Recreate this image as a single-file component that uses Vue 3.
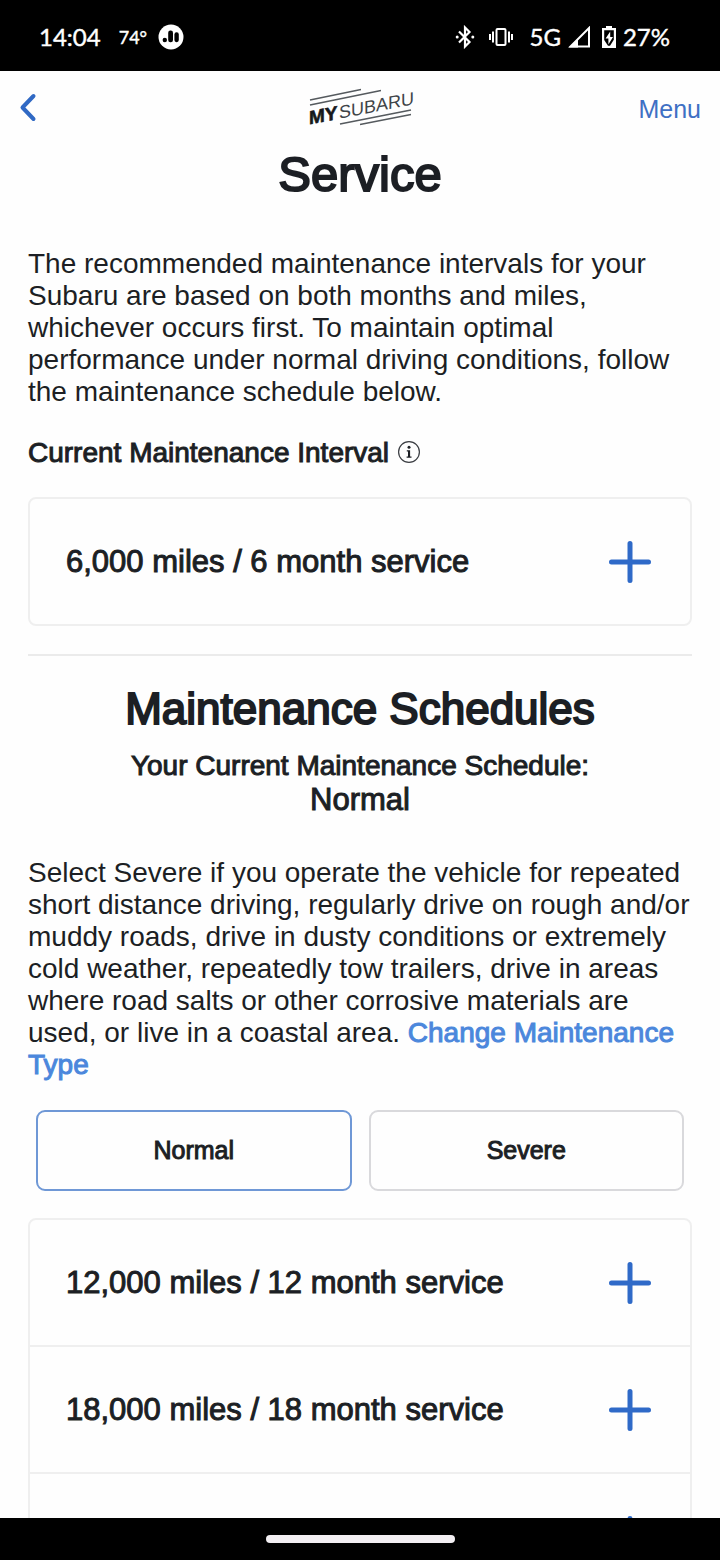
<script setup>
import { ref } from 'vue'

const current = '6,000 miles / 6 month service'
const intervals = [
  '12,000 miles / 12 month service',
  '18,000 miles / 18 month service',
]
const scheduleTypes = ['Normal', 'Severe']
const selected = ref('Normal')
</script>

<template>
  <div class="screen">
    <div class="status">
      <div class="status-group">
        <span class="clock">14:04</span>
        <span class="temp">74°</span>
        <svg class="app-badge" width="26" height="26" viewBox="0 0 26 26" aria-hidden="true">
          <circle cx="13" cy="13" r="12.5" fill="#fff" />
          <circle cx="6.8" cy="16" r="2.2" />
          <rect x="10.2" y="6.5" width="4.8" height="11.7" rx="2.2" />
          <rect x="16.4" y="8.3" width="4.4" height="9.9" rx="2.1" />
        </svg>
      </div>
      <div class="status-group">
        <svg width="20" height="24" viewBox="0 0 20 24" fill="none" stroke="#fff" stroke-width="2.2" aria-hidden="true">
          <path d="M4 6.5 14.5 17 10 21.5V2.5L14.5 7 4 17.5" />
          <circle cx="2.2" cy="12" r="1.5" fill="#fff" stroke="none" />
          <circle cx="17.8" cy="12" r="1.5" fill="#fff" stroke="none" />
        </svg>
        <svg class="vibrate" width="26" height="20" viewBox="0 0 26 20" fill="none" stroke="#fff" stroke-width="2" aria-hidden="true">
          <rect x="8.5" y="2" width="9" height="16" rx="1" />
          <path d="M5 4.5v11M21 4.5v11M2 7v6M24 7v6" />
        </svg>
        <span class="net">5G</span>
        <svg class="signal" width="23" height="22" viewBox="0 0 23 22" aria-hidden="true">
          <path d="M2.5 20.5H21V2Z" fill="none" stroke="#fff" stroke-width="2" />
          <path d="M1 21.5 10 12.5V21.5Z" fill="#fff" />
        </svg>
        <svg class="battery" width="14" height="24" viewBox="0 0 14 24" aria-hidden="true">
          <path d="M4 1h6v2h4v20H0V3h4Z" fill="#fff" />
          <path d="M2.2 5.2h9.6v9.6L8 20.8H6L2.2 15Z" fill="#000" />
          <path d="M8.2 6.5 3.6 13.6H6.4V19.6L11 12H8.2Z" fill="#fff" />
        </svg>
        <span class="net">27%</span>
      </div>
    </div>

    <main class="page">
      <header class="bar">
        <button class="back" aria-label="Back">
          <svg width="18" height="30" viewBox="0 0 18 30" fill="none" stroke="#3069c4" stroke-width="4" stroke-linecap="round" stroke-linejoin="round" aria-hidden="true">
            <path d="M14.5 3 3.5 14.5 14.5 26" />
          </svg>
        </button>
        <svg class="logo" width="106" height="42" viewBox="0 0 106 42" role="img" aria-label="MySubaru">
          <g stroke="#555a5e" stroke-width="1.5">
            <path d="M3 13 54 2.5M3 18 74 3.5" />
            <path d="M33 37 104 23M53 37.5 104 27.5" />
          </g>
          <g transform="skewY(-11)">
            <text class="logo-my" x="2" y="38">MY</text>
            <text class="logo-subaru" x="32" y="38">SUBARU</text>
          </g>
        </svg>
        <a class="menu" href="#menu">Menu</a>
      </header>

      <h1>Service</h1>

      <p class="copy intro">
        The recommended maintenance intervals for your Subaru are based on both months and miles,
        whichever occurs first. To maintain optimal performance under normal driving conditions,
        follow the maintenance schedule below.
      </p>

      <h2 class="label">
        Current Maintenance Interval
        <button class="info" aria-label="About maintenance intervals">
          <svg width="24" height="24" viewBox="0 0 24 24" aria-hidden="true">
            <circle cx="12" cy="11" r="10.4" fill="none" stroke="#3a3d42" stroke-width="1.2" />
            <circle cx="12" cy="6.2" r="1.5" fill="#1c1f24" />
            <path d="M9.8 9.2h3.3v6.4h1.4v1.2H9.6v-1.2H11v-5.2H9.8Z" fill="#1c1f24" />
          </svg>
        </button>
      </h2>

      <div class="card">
        <button class="row">
          <span>{{ current }}</span>
          <svg class="plus" width="42" height="42" viewBox="0 0 42 42" aria-hidden="true">
            <path d="M21 2.5v37M2.5 21h37" />
          </svg>
        </button>
      </div>

      <hr />

      <h2 class="heading">Maintenance Schedules</h2>
      <h3>
        Your Current Maintenance Schedule:
        <span class="type">Normal</span>
      </h3>

      <p class="copy">
        Select Severe if you operate the vehicle for repeated short distance driving, regularly
        drive on rough and/or muddy roads, drive in dusty conditions or extremely cold weather,
        repeatedly tow trailers, drive in areas where road salts or other corrosive materials are
        used, or live in a coastal area. <a class="change" href="#change">Change Maintenance Type</a>
      </p>

      <div class="switch">
        <button
          v-for="type in scheduleTypes"
          :key="type"
          class="choice"
          :class="{ active: selected === type }"
          :aria-pressed="selected === type"
          @click="selected = type"
        >
          {{ type }}
        </button>
      </div>

      <div class="card">
        <button v-for="item in intervals" :key="item" class="row">
          <span>{{ item }}</span>
          <svg class="plus" width="42" height="42" viewBox="0 0 42 42" aria-hidden="true">
            <path d="M21 2.5v37M2.5 21h37" />
          </svg>
        </button>
        <button class="row more" aria-label="More services">
          <svg class="plus" width="42" height="42" viewBox="0 0 42 42" aria-hidden="true">
            <path d="M21 2.5v37M2.5 21h37" />
          </svg>
        </button>
      </div>
    </main>

    <div class="nav"><span class="pill"></span></div>
  </div>
</template>

<style>
body {
  background: #fff;
}
</style>

<style scoped>
.screen {
  display: flex;
  flex-direction: column;
  height: 100vh;
  background: #fefefe;
  color: #1c1f24;
  font-family: "Liberation Sans", Arial, sans-serif;
}
button {
  margin: 0;
  padding: 0;
  border: 0;
  background: none;
  color: inherit;
  font: inherit;
  cursor: pointer;
}
h1, h2, h3, p {
  margin: 0;
  font-weight: 400;
}
svg {
  flex: none;
}

.status {
  flex: none;
  display: flex;
  justify-content: space-between;
  align-items: center;
  height: 71px;
  padding: 2px 50px 0 39px;
  box-sizing: border-box;
  background: #000;
  color: #fff;
  font-family: Lato, sans-serif;
  font-size: 24px;
  -webkit-text-stroke: 0.4px #fff;
}
.status-group {
  display: flex;
  align-items: center;
}
.temp {
  margin-left: 18px;
  font-size: 18px;
}
.app-badge {
  margin-left: 11px;
}
.vibrate {
  margin-left: 13px;
}
.vibrate + .net {
  margin-left: 15px;
}
.signal {
  margin: 0 11px 0 7px;
}
.battery {
  margin-right: 7px;
}

.page {
  flex: 1;
  min-height: 0;
  overflow-y: auto;
  scrollbar-width: none;
  padding: 0 28px;
}
.bar {
  display: grid;
  grid-template-columns: 1fr auto 1fr;
  align-items: center;
  height: 73px;
  margin: 0 -9px;
}
.back {
  justify-self: start;
  display: flex;
}
.logo {
  display: block;
  overflow: visible;
}
.logo-my {
  font-size: 19px;
  font-weight: 700;
  fill: #16191c;
  stroke: #16191c;
  stroke-width: 0.6px;
}
.logo-subaru {
  font-size: 18px;
  fill: #3f4448;
}
.menu {
  justify-self: end;
  padding-top: 3px;
  color: #3f70c4;
  font-size: 25px;
  text-decoration: none;
}

h1 {
  font-size: 49px;
  line-height: 60px;
  text-align: center;
  -webkit-text-stroke: 2px currentColor;
}
.copy {
  font-size: 28px;
  line-height: 32px;
}
.intro {
  margin-top: 44px;
}
.label {
  display: flex;
  align-items: center;
  gap: 8px;
  margin-top: 28px;
  font-size: 28px;
  line-height: 34px;
  -webkit-text-stroke: 1px currentColor;
}
.info {
  display: flex;
}
.card {
  margin-top: 27px;
  border: 2px solid #efefef;
  border-radius: 8px;
}
.row {
  display: flex;
  justify-content: space-between;
  align-items: center;
  width: 100%;
  height: 125px;
  padding: 0 39px 0 36px;
  font-size: 31px;
  text-align: left;
  -webkit-text-stroke: 1px currentColor;
}
.row + .row {
  height: 127px;
  border-top: 2px solid #efefef;
}
.row.more {
  justify-content: flex-end;
}
.plus path {
  fill: none;
  stroke: #2f6ac8;
  stroke-width: 5;
  stroke-linecap: round;
}
hr {
  height: 2px;
  margin: 28px 0;
  border: 0;
  background: #ebebeb;
}
.heading {
  font-size: 44px;
  line-height: 50px;
  text-align: center;
  -webkit-text-stroke: 2px currentColor;
}
h3 {
  margin: 15px 0 40px;
  font-size: 28px;
  line-height: 34px;
  text-align: center;
  -webkit-text-stroke: 1px currentColor;
}
.type {
  display: block;
  font-size: 31px;
}
.change {
  color: #4b87dc;
  text-decoration: none;
  -webkit-text-stroke: 1px currentColor;
}
.switch {
  display: grid;
  grid-template-columns: 1fr 1fr;
  gap: 17px;
  margin: 29px 8px 0;
}
.choice {
  height: 81px;
  border: 2px solid #d9d9dc;
  border-radius: 9px;
  font-size: 25px;
  -webkit-text-stroke: 1px currentColor;
}
.choice.active {
  border-color: #6f98d6;
}

.nav {
  flex: none;
  display: flex;
  justify-content: center;
  align-items: center;
  height: 42px;
  background: #000;
}
.pill {
  width: 189px;
  height: 8px;
  border-radius: 4px;
  background: #f3eff3;
}
</style>
